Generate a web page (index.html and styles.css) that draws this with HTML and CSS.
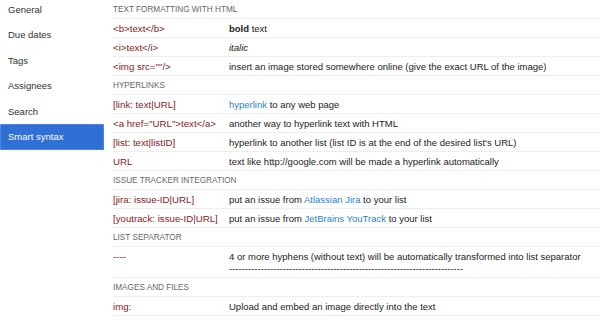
FILE: index.html
```html
<!DOCTYPE html>
<html>
  <head>
    <title>Smart syntax</title>
    <link rel="stylesheet" href="styles.css">
  </head>
  <body>
    <div class="page">
      <ul class="menu">
        <li>General</li>
        <li>Due dates</li>
        <li>Tags</li>
        <li>Assignees</li>
        <li>Search</li>
        <li class="active">Smart syntax</li>
      </ul>

      <table class="syntax">
        <tr class="section"><td colspan="2">Text formatting with HTML</td></tr>
        <tr>
          <td class="code">&lt;b&gt;text&lt;/b&gt;</td>
          <td><b>bold</b> text</td>
        </tr>
        <tr>
          <td class="code">&lt;i&gt;text&lt;/i&gt;</td>
          <td><i>italic</i></td>
        </tr>
        <tr>
          <td class="code">&lt;img src=""/&gt;</td>
          <td>insert an image stored somewhere online (give the exact URL of the image)</td>
        </tr>

        <tr class="section"><td colspan="2">Hyperlinks</td></tr>
        <tr>
          <td class="code">[link: text|URL]</td>
          <td><a href="#">hyperlink</a> to any web page</td>
        </tr>
        <tr>
          <td class="code">&lt;a href="URL"&gt;text&lt;/a&gt;</td>
          <td>another way to hyperlink text with HTML</td>
        </tr>
        <tr>
          <td class="code">[list: text|listID]</td>
          <td>hyperlink to another list (list ID is at the end of the desired list's URL)</td>
        </tr>
        <tr>
          <td class="code">URL</td>
          <td>text like http://google.com will be made a hyperlink automatically</td>
        </tr>

        <tr class="section"><td colspan="2">Issue tracker integration</td></tr>
        <tr>
          <td class="code">[jira: issue-ID|URL]</td>
          <td>put an issue from <a href="#">Atlassian Jira</a> to your list</td>
        </tr>
        <tr>
          <td class="code">[youtrack: issue-ID|URL]</td>
          <td>put an issue from <a href="#">JetBrains YouTrack</a> to your list</td>
        </tr>

        <tr class="section"><td colspan="2">List separator</td></tr>
        <tr>
          <td class="code">----</td>
          <td>4 or more hyphens (without text) will be automatically transformed into list separator<br>--------------------------------------------------------------------------</td>
        </tr>

        <tr class="section"><td colspan="2">Images and files</td></tr>
        <tr>
          <td class="code">img:</td>
          <td>Upload and embed an image directly into the text</td>
        </tr>
      </table>
    </div>
  </body>
</html>
```

FILE: styles.css
```css
body {
  margin: 0;
  font-family: "Liberation Sans", Arial, sans-serif;
  font-size: 9.5px;
  color: #222;
  background: #fff;
}
.page {
  display: flex;
  align-items: flex-start;
}
.menu {
  list-style: none;
  margin: -3.5px 0 0 0;
  padding: 0;
  width: 104px;
  flex: none;
}
.menu li {
  height: 25.5px;
  line-height: 25.5px;
  padding-left: 8px;
  font-size: 9.5px;
  color: #333;
  box-sizing: border-box;
}
.menu li.active {
  background-color: #2f6fd6;
  color: #fff;
  border: 1px dotted #6c9be3;
  line-height: 23.5px;
  padding-left: 7px;
}
.syntax {
  flex: 1;
  margin-left: 9px;
  border-collapse: collapse;
}
.syntax td {
  padding: 4px 0 2px;
  line-height: 12px;
  border-bottom: 1px solid #eeeeee;
  vertical-align: top;
  white-space: nowrap;
}
.syntax td.code {
  width: 116px;
  font-size: 9.7px;
  color: #8b2020;
}
.syntax tr.section td {
  text-transform: uppercase;
  font-size: 8.2px;
  color: #666;
}
.syntax a {
  color: #2b7fd4;
  text-decoration: none;
}
```
